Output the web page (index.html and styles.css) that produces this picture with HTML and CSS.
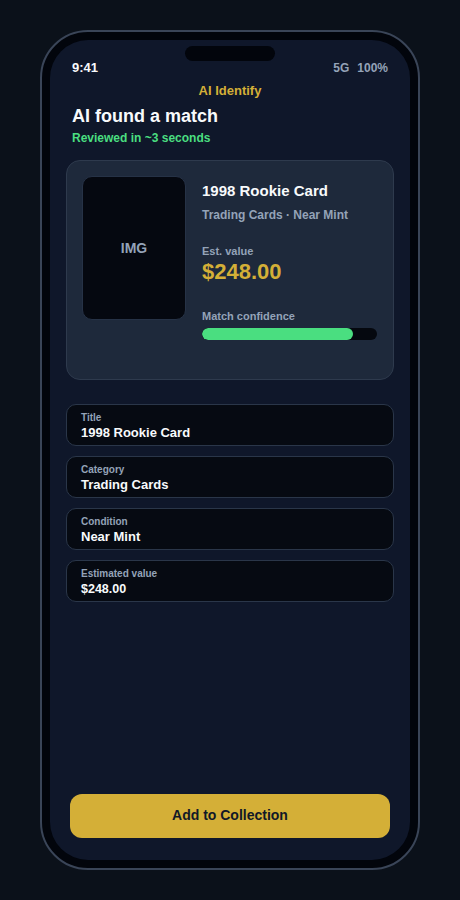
FILE: index.html
```html
<!DOCTYPE html>
<html lang="en">
<head>
<meta charset="utf-8">
<title>AI Identify</title>
<link rel="stylesheet" href="styles.css">
</head>
<body>
<div class="phone">
  <div class="screen">
    <div class="notch"></div>
    <div class="status">
      <span class="time">9:41</span>
      <span class="indicators"><span>5G</span><span>100%</span></span>
    </div>
    <div class="header">
      <div class="kicker">AI Identify</div>
      <h1 class="headline">AI found a match</h1>
      <div class="reviewed">Reviewed in ~3 seconds</div>
    </div>
    <div class="content">
      <div class="card">
        <div class="thumb">IMG</div>
        <div class="info">
          <div class="card-title">1998 Rookie Card</div>
          <div class="card-sub">Trading Cards · Near Mint</div>
          <div class="est-label">Est. value</div>
          <div class="est-value">$248.00</div>
          <div class="conf-label">Match confidence</div>
          <div class="bar"><div class="bar-fill" style="width:86%"></div></div>
        </div>
      </div>
      <div class="fields">
        <div class="field"><div class="f-label">Title</div><div class="f-value">1998 Rookie Card</div></div>
        <div class="field"><div class="f-label">Category</div><div class="f-value">Trading Cards</div></div>
        <div class="field"><div class="f-label">Condition</div><div class="f-value">Near Mint</div></div>
        <div class="field"><div class="f-label">Estimated value</div><div class="f-value f-value-small">$248.00</div></div>
      </div>
    </div>
    <div class="actions">
      <button class="primary">Add to Collection</button>
    </div>
  </div>
</div>
</body>
</html>
```
FILE: styles.css
```css
* { box-sizing: border-box; }
html, body { margin: 0; padding: 0; }
body {
  background: #0b111a;
  font-family: "Liberation Sans", Arial, sans-serif;
  padding-top: 30px;
  height: 900px;
}
.phone {
  width: 380px;
  height: 840px;
  margin: 0 auto;
  background: #02050c;
  border: 2px solid #3a4558;
  border-radius: 48px;
  padding: 8px;
}
.screen {
  position: relative;
  height: 100%;
  background: #0f172a;
  border-radius: 38px;
  padding: 20px 0 22px;
  display: flex;
  flex-direction: column;
}
.notch {
  position: absolute;
  top: 6px;
  left: 50%;
  transform: translateX(-50%);
  width: 90px;
  height: 15px;
  border-radius: 8px;
  background: #02050c;
}
.status {
  display: flex;
  justify-content: space-between;
  align-items: center;
  padding: 0 22px;
  height: 16px;
  line-height: 16px;
}
.time { color: #f8fafc; font-size: 13px; font-weight: 700; }
.indicators { display: flex; gap: 8px; color: #94a3b8; font-size: 12px; font-weight: 700; }
.header { padding: 7px 22px 0; }
.kicker {
  text-align: center;
  color: #d4af37;
  font-size: 13px;
  font-weight: 700;
  line-height: 16px;
}
.headline {
  margin: 6px 0 0;
  color: #f8fafc;
  font-size: 18px;
  font-weight: 700;
  line-height: 22px;
}
.reviewed {
  margin-top: 4px;
  color: #4ade80;
  font-size: 12px;
  font-weight: 700;
  line-height: 15px;
}
.content { padding: 14px 16px 0; }
.card {
  display: flex;
  gap: 16px;
  height: 220px;
  padding: 16px;
  background: #1e293b;
  border: 1px solid #2e3a4d;
  border-radius: 14px;
}
.thumb {
  flex: 0 0 104px;
  height: 144px;
  margin: -1px 0 0 -1px;
  background: #050810;
  border: 1px solid #263246;
  border-radius: 10px;
  display: flex;
  align-items: center;
  justify-content: center;
  color: #94a3b8;
  font-size: 14px;
  font-weight: 700;
}
.info { flex: 1; padding-top: 5px; }
.card-title { color: #f8fafc; font-size: 15px; font-weight: 700; line-height: 18px; }
.card-sub { margin-top: 8px; color: #94a3b8; font-size: 12px; font-weight: 700; line-height: 15px; }
.est-label { margin-top: 21px; color: #94a3b8; font-size: 11px; font-weight: 700; line-height: 14px; }
.est-value { margin-top: 1px; color: #d4af37; font-size: 22px; font-weight: 700; line-height: 26px; }
.conf-label { margin-top: 24px; color: #94a3b8; font-size: 11px; font-weight: 700; line-height: 14px; }
.bar {
  margin-top: 5px;
  height: 12px;
  border-radius: 6px;
  background: #05080f;
  overflow: hidden;
}
.bar-fill { height: 100%; background: #4ade80; border-radius: 6px; }
.fields {
  margin-top: 24px;
  display: flex;
  flex-direction: column;
  gap: 10px;
}
.field {
  height: 42px;
  padding: 7px 14px 0;
  background: #060a12;
  border: 1px solid #2a3649;
  border-radius: 10px;
}
.f-label { color: #94a3b8; font-size: 10px; font-weight: 700; line-height: 12px; }
.f-value { margin-top: 1px; color: #f8fafc; font-size: 13px; font-weight: 700; line-height: 16px; }
.f-value-small { font-size: 12.5px; }
.actions { margin-top: auto; padding: 0 20px; }
.primary {
  display: block;
  width: 100%;
  height: 44px;
  padding: 0 0 3px;
  border: 0;
  border-radius: 12px;
  background: #d4af37;
  color: #111827;
  font-family: "Liberation Sans", Arial, sans-serif;
  font-size: 14px;
  font-weight: 700;
}
```
